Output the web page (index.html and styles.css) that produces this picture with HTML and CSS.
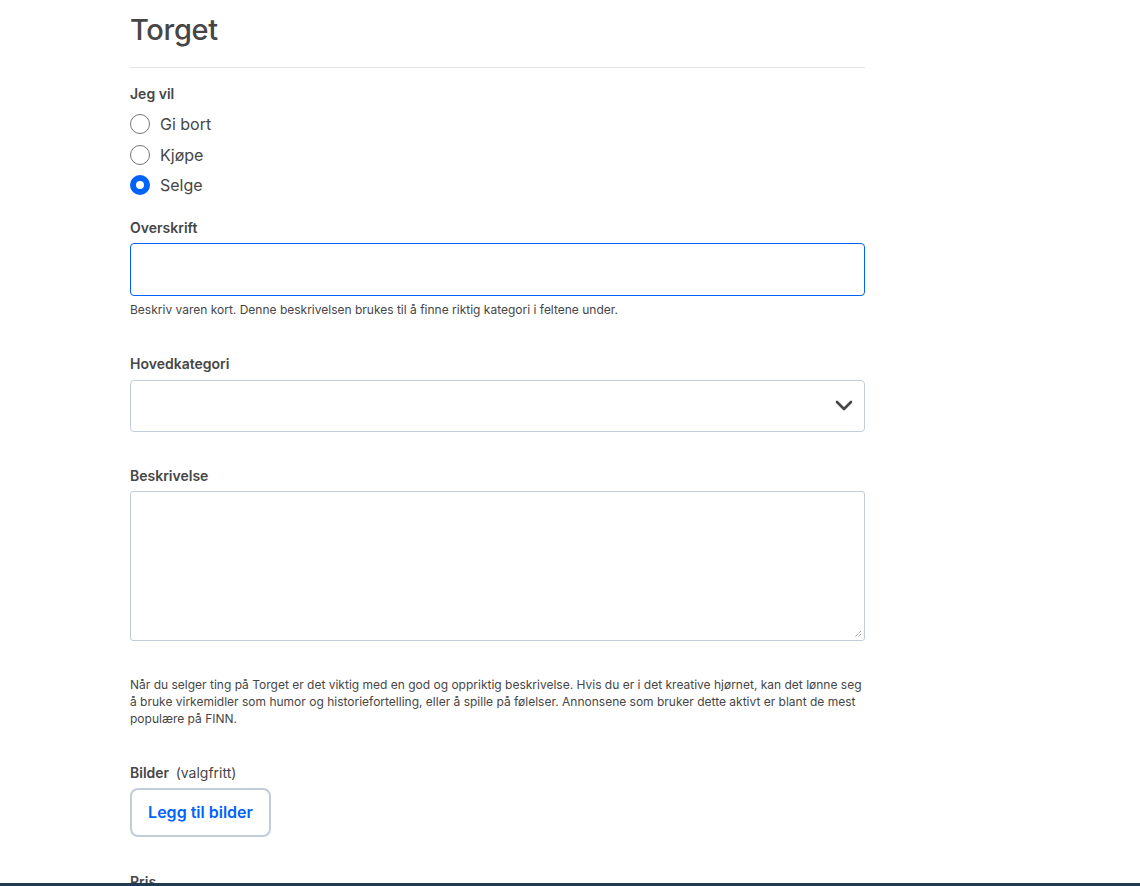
FILE: index.html
```html
<!DOCTYPE html>
<html lang="no">
<head>
<meta charset="utf-8">
<title>Torget</title>
<link rel="stylesheet" href="styles.css">
</head>
<body>
<main class="page">
  <h1 class="title">Torget</h1>
  <hr class="divider">
  <fieldset class="group">
    <legend class="label">Jeg vil</legend>
    <label class="radio"><span class="dot"></span>Gi bort</label>
    <label class="radio"><span class="dot"></span>Kjøpe</label>
    <label class="radio"><span class="dot checked"></span>Selge</label>
  </fieldset>

  <div class="field f-heading">
    <div class="label">Overskrift</div>
    <div class="input focused"></div>
    <div class="help">Beskriv varen kort. Denne beskrivelsen brukes til å finne riktig kategori i feltene under.</div>
  </div>

  <div class="field f-cat">
    <div class="label">Hovedkategori</div>
    <div class="input select">
      <svg class="chev" width="18" height="11" viewBox="0 0 18 11"><path d="M2 2l7 7 7-7" fill="none" stroke="#464646" stroke-width="2.6" stroke-linecap="round" stroke-linejoin="round"/></svg>
    </div>
  </div>

  <div class="field f-desc">
    <div class="label">Beskrivelse</div>
    <div class="input textarea">
      <svg class="grip" width="8" height="8" viewBox="0 0 8 8"><path d="M7 1L1 7M7 4L4 7" stroke="#777" stroke-width="1" stroke-dasharray="1 1"/></svg>
    </div>
    <p class="help long">Når du selger ting på Torget er det viktig med en god og oppriktig beskrivelse. Hvis du er i det kreative hjørnet, kan det lønne seg å bruke virkemidler som humor og historiefortelling, eller å spille på følelser. Annonsene som bruker dette aktivt er blant de mest populære på FINN.</p>
  </div>

  <div class="field f-img">
    <div class="label">Bilder <span class="opt">(valgfritt)</span></div>
    <button class="btn">Legg til bilder</button>
  </div>

  <div class="field f-price">
    <div class="label">Pris</div>
  </div>
</main>
<div class="bottombar"></div>
</body>
</html>
```
FILE: styles.css
```css
html, body {
  margin: 0;
  padding: 0;
  background: #fff;
}
body {
  font-family: Inter, "Noto Sans", sans-serif;
  color: #464646;
  overflow: hidden;
  height: 886px;
}
.page {
  width: 735px;
  margin-left: 130px;
  padding-top: 12px;
}
.title {
  font-size: 29px;
  font-weight: 500;
  line-height: 36px;
  margin: 0;
  color: #464646;
  letter-spacing: -0.3px;
}
.divider {
  border: 0;
  border-top: 1px solid #e2e2e2;
  margin: 19px 0 0 0;
}
.group {
  border: 0;
  margin: 0;
  padding: 0;
}
.label {
  font-size: 14px;
  font-weight: 600;
  line-height: 18px;
  color: #464646;
  padding: 0;
}
legend.label {
  padding-top: 17px;
  margin-bottom: 6px;
}
.group .label { float: left; width: 100%; }
.radio {
  clear: both;
  display: flex;
  align-items: center;
  gap: 10px;
  height: 30.5px;
  font-size: 16px;
  color: #464646;
}
.dot {
  width: 18px;
  height: 18px;
  border: 1px solid #767676;
  border-radius: 50%;
  box-sizing: content-box;
  flex: none;
}
.dot.checked {
  width: 8px;
  height: 8px;
  border: 6px solid #0063fb;
}
.f-heading { margin-top: 18px; }
.field .label { margin-bottom: 6px; }
.input {
  box-sizing: border-box;
  border: 1px solid #c3ccd9;
  border-radius: 4px;
  height: 53px;
  position: relative;
}
.input.focused { border-color: #0063fb; }
.help {
  font-size: 12px;
  line-height: 17px;
  margin: 5px 0 0 0;
  color: #464646;
}
.f-cat { margin-top: 37px; }
.f-cat .label { margin-bottom: 7px; }
.select { height: 52px; display: flex; align-items: center; justify-content: flex-end; padding-right: 11px; }
.chev { display: block; }
.f-desc { margin-top: 35px; }
.textarea { height: 150px; border-radius: 3px; }
.grip { position: absolute; right: 2px; bottom: 2px; }
.help.long { margin-top: 35px; }
.f-img { margin-top: 37px; }
.opt { font-weight: 400; margin-left: 3px; }
.f-img .label { margin-bottom: 6px; }
.btn {
  display: block;
  box-sizing: border-box;
  font-family: inherit;
  font-size: 16px;
  font-weight: 600;
  color: #0063fb;
  background: #fff;
  border: 2px solid #c3ccd9;
  border-radius: 8px;
  height: 49px;
  width: 141px;
  padding: 0;
  cursor: pointer;
}
.f-price { margin-top: 36px; }
.bottombar {
  position: fixed;
  left: 0;
  right: 0;
  bottom: 0;
  height: 3px;
  background: #1f3a52;
}
```
